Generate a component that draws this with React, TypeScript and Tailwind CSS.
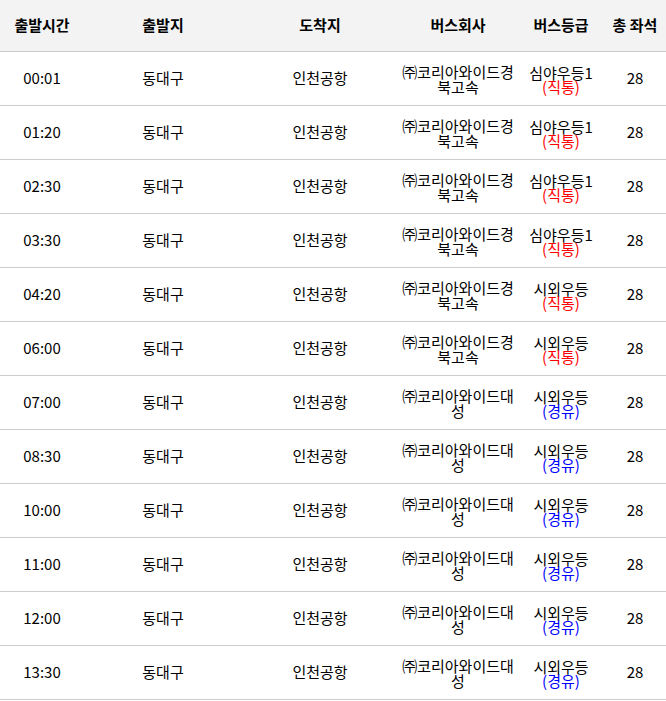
import React from "react";

type Row = { time: string; c1: string; c2: string; grade: string; route: string };

const rows: Row[] = [
  { time: "00:01", c1: "㈜코리아와이드경", c2: "북고속", grade: "심야우등1", route: "직통" },
  { time: "01:20", c1: "㈜코리아와이드경", c2: "북고속", grade: "심야우등1", route: "직통" },
  { time: "02:30", c1: "㈜코리아와이드경", c2: "북고속", grade: "심야우등1", route: "직통" },
  { time: "03:30", c1: "㈜코리아와이드경", c2: "북고속", grade: "심야우등1", route: "직통" },
  { time: "04:20", c1: "㈜코리아와이드경", c2: "북고속", grade: "시외우등", route: "직통" },
  { time: "06:00", c1: "㈜코리아와이드경", c2: "북고속", grade: "시외우등", route: "직통" },
  { time: "07:00", c1: "㈜코리아와이드대", c2: "성", grade: "시외우등", route: "경유" },
  { time: "08:30", c1: "㈜코리아와이드대", c2: "성", grade: "시외우등", route: "경유" },
  { time: "10:00", c1: "㈜코리아와이드대", c2: "성", grade: "시외우등", route: "경유" },
  { time: "11:00", c1: "㈜코리아와이드대", c2: "성", grade: "시외우등", route: "경유" },
  { time: "12:00", c1: "㈜코리아와이드대", c2: "성", grade: "시외우등", route: "경유" },
  { time: "13:30", c1: "㈜코리아와이드대", c2: "성", grade: "시외우등", route: "경유" },
];

const font = { fontFamily: '"Noto Sans CJK KR", "Noto Sans", sans-serif' };

export default function App() {
  return (
    <div className="w-[666px] bg-white text-black text-[15px]" style={font}>
      <div className="flex h-[52px] items-center bg-[#f3f3f3] border-b border-[#cccccc] font-bold">
        <div className="w-[84px] text-center">출발시간</div>
        <div className="w-[158px] text-center">출발지</div>
        <div className="w-[156px] text-center">도착지</div>
        <div className="w-[120px] text-center">버스회사</div>
        <div className="w-[86px] text-center">버스등급</div>
        <div className="w-[62px] text-center">총 좌석</div>
      </div>
      {rows.map((r, i) => (
        <div key={i} className="flex h-[54px] items-center border-b border-[#cccccc]">
          <div className="w-[84px] text-center">{r.time}</div>
          <div className="w-[158px] text-center">동대구</div>
          <div className="w-[156px] text-center">인천공항</div>
          <div className="w-[120px] text-center leading-[15px] whitespace-nowrap">
            <div>{r.c1}</div>
            <div>{r.c2}</div>
          </div>
          <div className="w-[86px] text-center leading-[14px] pt-[3px] whitespace-nowrap">
            <div>{r.grade}</div>
            <div className={r.route === "직통" ? "text-[#ff0000]" : "text-[#0000ff]"}>({r.route})</div>
          </div>
          <div className="w-[62px] text-center">28</div>
        </div>
      ))}
    </div>
  );
}
